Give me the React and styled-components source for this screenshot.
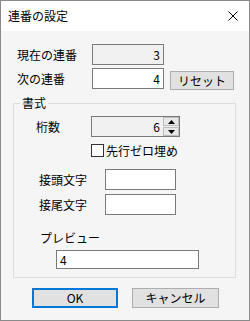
import React from 'react';
import styled, { createGlobalStyle } from 'styled-components';

const GlobalStyle = createGlobalStyle`
  html, body {
    margin: 0;
    padding: 0;
    background: #ffffff;
  }
  body {
    font-family: "Noto Sans CJK JP", "Liberation Sans", sans-serif;
    font-size: 12px;
    color: #000;
  }
`;

const Window = styled.div`
  width: 250px;
  height: 321px;
  box-sizing: border-box;
  border: 1px solid #8a8a8a;
  display: flex;
  flex-direction: column;
  background: #f5f5f5;
`;

const TitleBar = styled.div`
  height: 30px;
  flex: none;
  background: #ffffff;
  display: flex;
  align-items: center;
  justify-content: space-between;
  padding: 0 11px 0 7px;
`;

const Title = styled.span`
  font-size: 12px;
  line-height: 14px;
`;

const Body = styled.div`
  flex: 1;
  display: flex;
  flex-direction: column;
  padding-top: 13px;
`;

const Row = styled.div`
  display: flex;
  align-items: ${p => p.align || 'center'};
  padding-left: ${p => p.indent}px;
  margin-top: ${p => p.top || 0}px;
  height: ${p => p.h || 21}px;
`;

const Label = styled.span`
  width: ${p => p.w}px;
  flex: none;
  line-height: 14px;
  white-space: nowrap;
`;

const Field = styled.div`
  box-sizing: border-box;
  width: ${p => p.w}px;
  height: ${p => p.h || 21}px;
  border: 1px solid #7a7a7a;
  background: ${p => (p.readOnly ? '#f1f1f1' : '#ffffff')};
  display: flex;
  align-items: center;
  justify-content: ${p => (p.right ? 'flex-end' : 'flex-start')};
  padding: 0 3px;
  font-size: 12px;
  line-height: 14px;
`;

const Button = styled.button`
  box-sizing: border-box;
  width: ${p => p.w}px;
  height: ${p => p.h || 20}px;
  margin: ${p => p.m || 0};
  padding: 0;
  background: #e1e1e1;
  border: ${p => (p.primary ? '2px solid #0078d7' : '1px solid #adadad')};
  font-family: inherit;
  font-size: 12px;
  line-height: 14px;
  color: #000;
`;

const Group = styled.fieldset`
  margin: 7px 13px 0 12px;
  padding: 6px 0 8px 0;
  border: 1px solid #dcdcdc;
  min-width: 0;
`;

const Legend = styled.legend`
  margin-left: 6px;
  padding: 0 2px;
  font-size: 12px;
  line-height: 14px;
`;

const Spin = styled.div`
  box-sizing: border-box;
  width: 89px;
  height: 21px;
  border: 1px solid #7a7a7a;
  background: #f1f1f1;
  display: flex;
`;

const SpinValue = styled.div`
  flex: 1;
  display: flex;
  align-items: center;
  justify-content: flex-end;
  padding-right: 3px;
  line-height: 14px;
`;

const SpinArrows = styled.div`
  width: 16px;
  display: flex;
  flex-direction: column;
  gap: 1px;
  padding: 0 0 0 0;
`;

const SpinButton = styled.div`
  flex: 1;
  box-sizing: border-box;
  border: 1px solid #bcbcbc;
  background: #e8e8e8;
  display: flex;
  align-items: center;
  justify-content: center;
`;

const Check = styled.div`
  width: 13px;
  height: 13px;
  box-sizing: border-box;
  border: 1px solid #333;
  background: #fff;
  margin-right: 2px;
  flex: none;
`;

const Footer = styled.div`
  display: flex;
  gap: 14px;
  padding-left: 31px;
  margin-top: 10px;
`;

const Arrow = ({ up }) => (
  <svg width="7" height="4" viewBox="0 0 7 4">
    <path d={up ? 'M0 4 L3.5 0 L7 4 Z' : 'M0 0 L3.5 4 L7 0 Z'} fill="#000" />
  </svg>
);

export default function App() {
  return (
    <>
      <GlobalStyle />
      <Window>
        <TitleBar>
          <Title>連番の設定</Title>
          <svg width="10" height="10" viewBox="0 0 10 10">
            <path d="M0.5 0.5 L9.5 9.5 M9.5 0.5 L0.5 9.5" stroke="#000" strokeWidth="1" />
          </svg>
        </TitleBar>
        <Body>
          <Row indent={16}>
            <Label w={75}>現在の連番</Label>
            <Field w={72} readOnly right>3</Field>
          </Row>
          <Row indent={16} top={3} align="flex-start">
            <Label w={75} style={{ marginTop: 4 }}>次の連番</Label>
            <Field w={72} right>4</Field>
            <Button w={64} h={19} m="3px 0 0 6px">リセット</Button>
          </Row>
          <Group>
            <Legend>書式</Legend>
            <Row indent={22}>
              <Label w={55}>桁数</Label>
              <Spin>
                <SpinValue>6</SpinValue>
                <SpinArrows>
                  <SpinButton><Arrow up /></SpinButton>
                  <SpinButton><Arrow /></SpinButton>
                </SpinArrows>
              </Spin>
            </Row>
            <Row indent={77} top={7} h={13}>
              <Check />
              <Label>先行ゼロ埋め</Label>
            </Row>
            <Row indent={25} top={12}>
              <Label w={66}>接頭文字</Label>
              <Field w={71} />
            </Row>
            <Row indent={25} top={4}>
              <Label w={66}>接尾文字</Label>
              <Field w={71} />
            </Row>
            <Row indent={26} top={16} h={14}>
              <Label>プレビュー</Label>
            </Row>
            <Row indent={42} top={5} h={19}>
              <Field w={143} h={19}>4</Field>
            </Row>
          </Group>
          <Footer>
            <Button w={86} primary>OK</Button>
            <Button w={87}>キャンセル</Button>
          </Footer>
        </Body>
      </Window>
    </>
  );
}
